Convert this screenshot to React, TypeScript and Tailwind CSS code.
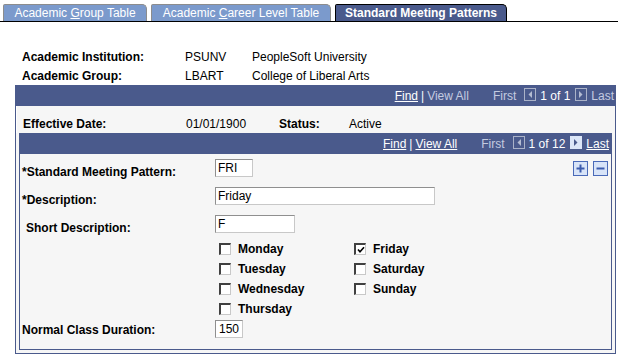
import React from "react";

const navy = "bg-[#4a5a8c]";

function Arrow({ dir, enabled }: { dir: "left" | "right"; enabled?: boolean }) {
  const pts = dir === "left" ? "8,3 8,10 4.5,6.5" : "4,3 4,10 7.5,6.5";
  return (
    <span
      className={
        enabled
          ? "inline-flex w-[12px] h-[13px] bg-[#dce6f8]"
          : "inline-flex w-[12px] h-[13px] border border-[#aab2c8]"
      }
    >
      <svg width="12" height="13" viewBox="0 0 12 13" className={enabled ? "" : "-m-px"}>
        <polygon points={pts} fill={enabled ? "#4a5a8c" : "#b4bcd2"} />
      </svg>
    </span>
  );
}

function NavBar({ total, last }: { total: number; last: boolean }) {
  const on = "text-white underline";
  const off = "text-[#c4cbe0]";
  return (
    <div className={`${navy} h-[20px] flex items-center justify-end text-[12px] leading-[14px]`}>
      <span className={on}>Find</span>
      <span className="text-white mx-[3px]">|</span>
      <span className={last ? on : off}>View All</span>
      <span className={`${off} ml-[24px]`}>First</span>
      <span className="ml-[8px]">
        <Arrow dir="left" />
      </span>
      <span className="text-white ml-[4px]">1 of {total}</span>
      <span className="ml-[5px]">
        <Arrow dir="right" enabled={last} />
      </span>
      <span className={`${last ? on : off} ml-[4px]`}>Last</span>
    </div>
  );
}

function TextBox({ value, w, right }: { value: string; w: string; right?: boolean }) {
  return (
    <div
      className={`${w} h-[18px] bg-white border border-t-[#8f8f8f] border-l-[#8f8f8f] border-r-[#c8c8c8] border-b-[#c8c8c8] flex items-center text-[12px] leading-[14px] ${
        right ? "justify-end pr-[3px]" : "pl-[2px]"
      }`}
    >
      {value}
    </div>
  );
}

function Check({ label, checked }: { label: string; checked?: boolean }) {
  return (
    <div className="h-[20px] flex items-center">
      <span className="w-[12px] h-[12px] bg-white border-t-2 border-l-2 border-t-[#404040] border-l-[#404040] border-b border-r border-b-[#c8c8c8] border-r-[#c8c8c8] flex items-center justify-center">
        {checked && (
          <svg width="8" height="8" viewBox="0 0 8 8">
            <path d="M1 3.5 L3 5.8 L7 1.2" stroke="#000" strokeWidth="1.6" fill="none" />
          </svg>
        )}
      </span>
      <span className="ml-[7px] font-bold">{label}</span>
    </div>
  );
}

function PmButton({ minus }: { minus?: boolean }) {
  return (
    <span className="inline-flex w-[15px] h-[15px] border border-[#4a6ab8] bg-[#d8e4f8] items-center justify-center">
      <svg width="11" height="11" viewBox="0 0 11 11">
        <rect x="1.5" y="4.5" width="8" height="2" fill="#3d5cad" />
        {!minus && <rect x="4.5" y="1.5" width="2" height="8" fill="#3d5cad" />}
      </svg>
    </span>
  );
}

export default function App() {
  const days1 = ["Monday", "Tuesday", "Wednesday", "Thursday"];
  const days2 = ["Friday", "Saturday", "Sunday"];

  return (
    <div className="w-[618px] h-[359px] bg-white overflow-hidden text-black text-[12px] leading-[14px] font-['Liberation_Sans',Arial,sans-serif]">
      {/* tabs */}
      <div className="h-[22px] pt-[4px] pl-[3px] flex items-end gap-[4px] border-b border-black">
        <div className="h-[17px] w-[144px] bg-[#7b9acc] border-t border-l border-r border-[#8c8c8c] rounded-tr-[5px] rounded-tl-[2px] text-white flex items-center justify-center">
          Academic&nbsp;<u>G</u>roup Table
        </div>
        <div className="h-[17px] w-[180px] bg-[#7b9acc] border-t border-l border-r border-[#8c8c8c] rounded-tr-[5px] rounded-tl-[2px] text-white flex items-center justify-center">
          Academic&nbsp;<u>C</u>areer Level Table
        </div>
        <div className="h-[17px] w-[172px] bg-[#4a5a8c] border-t border-l border-r border-black rounded-tr-[5px] rounded-tl-[2px] text-white font-bold flex items-center justify-center">
          Standard Meeting Patterns
        </div>
      </div>

      {/* key fields */}
      <div className="pt-[25px] pl-[22px]">
        <div className="grid grid-cols-[163px_67px_1fr]">
          <div className="h-[19px] flex items-center font-bold">Academic Institution:</div>
          <div className="h-[19px] flex items-center">PSUNV</div>
          <div className="h-[19px] flex items-center">PeopleSoft University</div>
          <div className="h-[19px] flex items-center font-bold">Academic Group:</div>
          <div className="h-[19px] flex items-center">LBART</div>
          <div className="h-[19px] flex items-center">College of Liberal Arts</div>
        </div>
      </div>

      {/* outer scroll area */}
      <div className="ml-[15px] w-[601px] border border-[#4a5a8c] bg-[#f6f6f6] pb-[3px]">
        <div className="pr-[1px] bg-[#4a5a8c]">
          <NavBar total={1} last={false} />
        </div>
        <div className="h-[27px] flex items-end pb-[2px] pl-[6px] border-l border-white">
          <div className="w-[163px] font-bold">Effective Date:</div>
          <div className="w-[93px]">01/01/1900</div>
          <div className="w-[70px] font-bold">Status:</div>
          <div>Active</div>
        </div>

        {/* inner scroll area */}
        <div className="mx-[3px] border border-[#4a5a8c] bg-[#f6f6f6]">
          <div className="pr-[2px] bg-[#4a5a8c]">
            <NavBar total={12} last={true} />
          </div>
          <div className="pt-[5px] pb-[11px]">
            <div className="h-[28px] flex items-start">
              <div className="w-[195px] pl-[2px] pt-[6px] font-bold">*Standard Meeting Pattern:</div>
              <TextBox value="FRI" w="w-[38px]" />
              <div className="ml-auto mr-[3px] mt-[2px] flex gap-[5px]">
                <PmButton />
                <PmButton minus />
              </div>
            </div>
            <div className="h-[28px] flex items-start">
              <div className="w-[195px] pl-[2px] pt-[6px] font-bold">*Description:</div>
              <TextBox value="Friday" w="w-[220px]" />
            </div>
            <div className="h-[24px] flex items-start">
              <div className="w-[195px] pl-[6px] pt-[6px] font-bold">Short Description:</div>
              <TextBox value="F" w="w-[80px]" />
            </div>
            <div className="flex pl-[199px]">
              <div className="w-[135px]">
                {days1.map((d) => (
                  <Check key={d} label={d} />
                ))}
              </div>
              <div>
                {days2.map((d) => (
                  <Check key={d} label={d} checked={d === "Friday"} />
                ))}
              </div>
            </div>
            <div className="mt-[1px] flex items-center">
              <div className="w-[195px] pl-[2px] pt-[2px] font-bold">Normal Class Duration:</div>
              <TextBox value="150" w="w-[28px]" right />
            </div>
          </div>
        </div>
      </div>
    </div>
  );
}
